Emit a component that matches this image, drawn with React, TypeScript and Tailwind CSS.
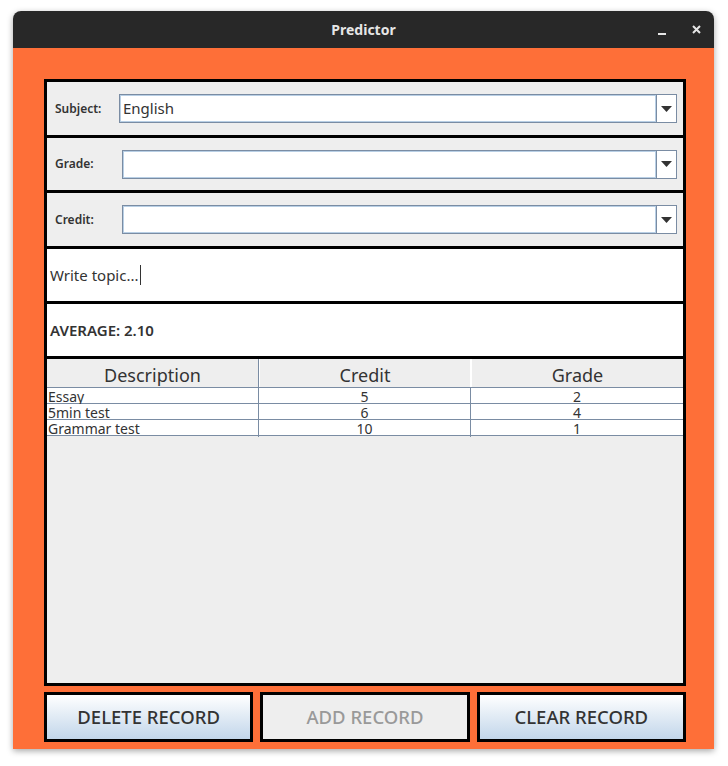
import React from "react";

const font = { fontFamily: '"Noto Sans", "Open Sans", sans-serif' };

function Combo({ label, value, fieldLeft }: { label: string; value?: string; fieldLeft: string }) {
  return (
    <div className="h-full flex items-center bg-[#eeeeee] pl-[8px] pr-[6px]">
      <div className={`${fieldLeft} shrink-0 text-[12px] font-semibold text-[#333333]`}>{label}</div>
      <div className="flex-1 flex h-[29px]">
        <div className="flex-1 bg-white border border-[#7a8ca3] shadow-[inset_0_0_0_1px_#b8cfe5] flex items-center pl-[3px] text-[15px] text-[#333333]">
          {value}
        </div>
        <div className="w-[20px] bg-white border border-l-0 border-[#7a8ca3] flex items-center justify-center">
          <svg width="11" height="6" viewBox="0 0 11 6">
            <path d="M0 0 H11 L5.5 6 Z" fill="#333333" />
          </svg>
        </div>
      </div>
    </div>
  );
}

const rows = [
  ["Essay", "5", "2"],
  ["5min test", "6", "4"],
  ["Grammar test", "10", "1"],
];

export default function App() {
  return (
    <div className="w-[728px] h-[766px] bg-white pt-[11px] pl-[13px]" style={font}>
      <div className="w-[701px] h-[738px] flex flex-col shadow-[0_2px_6px_rgba(0,0,0,0.35)] rounded-t-[8px]">
        <div className="h-[37px] shrink-0 bg-[#282828] rounded-t-[8px] relative flex items-center justify-center">
          <span className="text-[14px] font-bold text-[#e6e6e6]">Predictor</span>
          <div className="absolute right-[13px] top-0 h-full flex items-center gap-[26px]">
            <div className="w-[8px] h-[2px] bg-[#e6e6e6] mt-[8px]" />
            <svg width="9" height="9" viewBox="0 0 9 9">
              <path d="M1 1 L8 8 M8 1 L1 8" stroke="#e6e6e6" strokeWidth="2" />
            </svg>
          </div>
        </div>
        <div className="flex-1 bg-[#fe6f38] pt-[31px] pl-[31px] pr-[28px] flex flex-col">
          <div className="bg-black p-[3px] flex flex-col gap-[3px]">
            <div className="h-[53px]">
              <Combo label="Subject:" value="English" fieldLeft="w-[64px]" />
            </div>
            <div className="h-[52px]">
              <Combo label="Grade:" fieldLeft="w-[67px]" />
            </div>
            <div className="h-[53px]">
              <Combo label="Credit:" fieldLeft="w-[67px]" />
            </div>
            <div className="h-[52px] bg-white flex items-center pl-[3px] text-[15px] text-[#333333]">
              <span>Write topic...</span>
              <span className="w-[1px] h-[20px] bg-[#333333] ml-[1px]" />
            </div>
            <div className="h-[52px] bg-white flex items-center pl-[3px] text-[15px] font-semibold text-[#333333]">
              AVERAGE: 2.10
            </div>
            <div className="h-[324px] bg-[#eeeeee] flex flex-col">
              <div className="grid grid-cols-3 h-[29px] shrink-0 border-b border-[#7a8ca3]">
                {["Description", "Credit", "Grade"].map((h, i) => (
                  <div
                    key={h}
                    className={`flex items-center justify-center pt-[3px] text-[18px] leading-[24px] text-[#333333] bg-[#eeeeee] ${i < 2 ? "border-r border-[#7a8ca3]" : ""} ${i > 0 ? "border-l border-white" : ""}`}
                  >
                    {h}
                  </div>
                ))}
              </div>
              {rows.map((r) => (
                <div key={r[0]} className="grid grid-cols-3 h-[16px] shrink-0 bg-white border-b border-[#7a8ca3] text-[14px] leading-[17px] text-[#333333]">
                  <div className="border-r border-[#7a8ca3] pl-[1px]">{r[0]}</div>
                  <div className="border-r border-[#7a8ca3] text-center">{r[1]}</div>
                  <div className="text-center">{r[2]}</div>
                </div>
              ))}
            </div>
          </div>
          <div className="grid grid-cols-3 gap-[7px] mt-[6px] h-[50px]">
            <button className="border-[3px] border-black bg-gradient-to-b from-white to-[#c2d6ea] text-[18.5px] font-medium text-[#333333]">
              DELETE RECORD
            </button>
            <button className="border-[3px] border-black bg-[#eeeeee] text-[18.5px] font-medium text-[#999999]">
              ADD RECORD
            </button>
            <button className="border-[3px] border-black bg-gradient-to-b from-white to-[#c2d6ea] text-[18.5px] font-medium text-[#333333]">
              CLEAR RECORD
            </button>
          </div>
        </div>
      </div>
    </div>
  );
}
